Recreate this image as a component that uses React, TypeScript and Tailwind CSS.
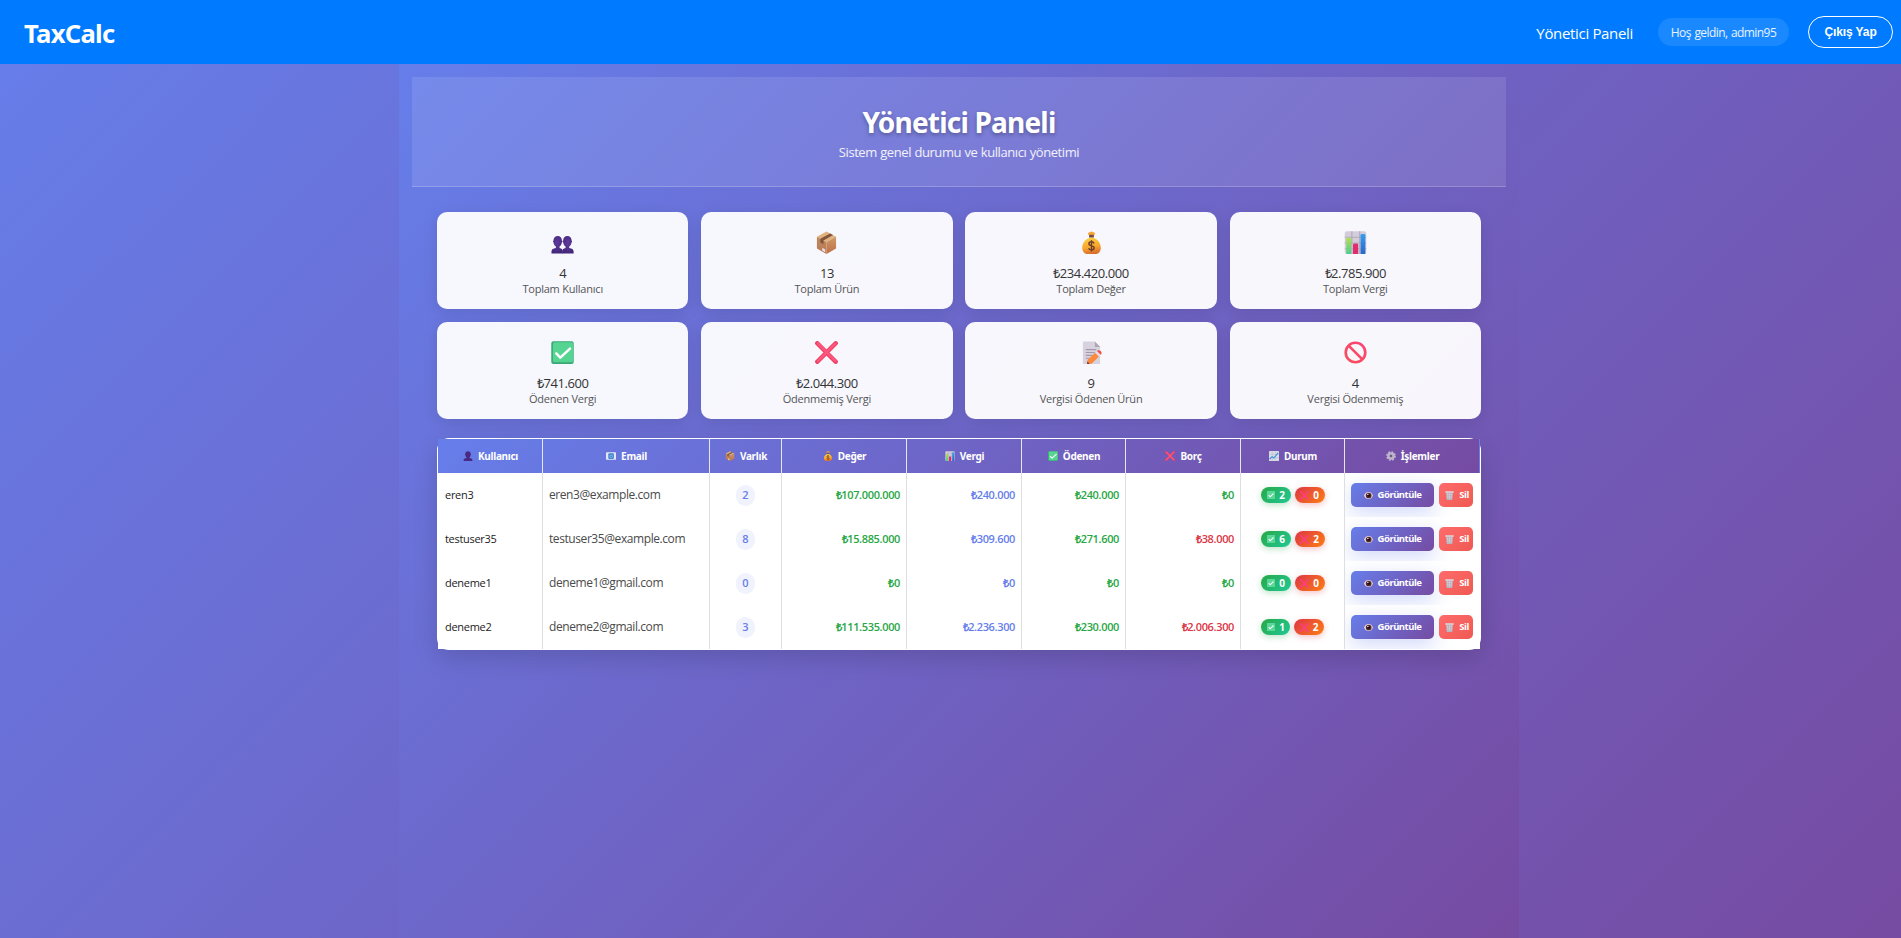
import React from 'react';

type IconProps = { className?: string };

const svg = (body: React.ReactNode) =>
  function Icon({ className = '' }: IconProps) {
    return (
      <svg viewBox="0 0 24 24" className={`block shrink-0 ${className}`} aria-hidden="true">
        {body}
      </svg>
    );
  };

const UsersIcon = svg(
  <>
    <defs>
      <radialGradient id="usr" cx="0.5" cy="0.4" r="0.7">
        <stop offset="0" stopColor="#5f3a9c" />
        <stop offset="1" stopColor="#3f2474" />
      </radialGradient>
    </defs>
    <path d="M0.5 23.6v-2.2c0-2.2 1.8-3.4 4.6-3.7v-1.5C3.6 15 2.9 13.700 2.700 12c-0.800-0.200-0.800-1.700-0.100-2C2.700 7 4.400 5.300 7 5.300s4.300 1.700 4.400 4.700c0.700 0.300 0.700 1.800-0.100 2-0.200 1.700-0.900 3-2.400 4.200v1.500c2.200 0.300 3.400 1.500 3.400 3.700v2.200z" fill="url(#usr)" />
    <path d="M11.800 23.600v-2.200c0-2.200 1.200-3.400 3.400-3.700v-1.500c-1.500-1.200-2.200-2.500-2.400-4.200-0.800-0.200-0.800-1.700-0.100-2 0.100-3 1.800-4.700 4.400-4.700s4.300 1.700 4.400 4.700c0.700 0.300 0.700 1.800-0.100 2-0.200 1.700-0.900 3-2.400 4.200v1.500c2.800 0.300 4.600 1.500 4.600 3.700v2.200z" fill="url(#usr)" />
  </>,
);

const UserIcon = svg(
  <path d="M1.500 24v-2.500c0-3 2.600-4.500 6.900-5v-1.800C6.600 13.400 5.700 11.700 5.500 9.500c-0.900-0.300-0.900-2.100-0.100-2.500C5.600 3 8.200 0.500 12 0.500s6.400 2.500 6.600 6.500c0.800 0.400 0.800 2.200-0.100 2.500-0.200 2.200-1.100 3.900-2.900 5.200v1.800c4.300 0.500 6.900 2 6.900 5V24z" fill="#482a83" />,
);

const BoxIcon = svg(
  <>
    <defs>
      <linearGradient id="bxl" x1="0" y1="0" x2="0" y2="1">
        <stop offset="0" stopColor="#c08a5e" />
        <stop offset="1" stopColor="#b87a55" />
      </linearGradient>
      <linearGradient id="bxr" x1="0" y1="0" x2="0" y2="1">
        <stop offset="0" stopColor="#cf9a68" />
        <stop offset="1" stopColor="#bd7045" />
      </linearGradient>
    </defs>
    <path d="M12 0.500L22 6 12 11.500 2 6z" fill="#e0b37e" />
    <path d="M2 6l10 5.500V24L2 18.300z" fill="url(#bxl)" />
    <path d="M22 6l-10 5.500V24l10-5.700z" fill="url(#bxr)" />
    <path d="M5.600 8l10.200-5.400 3 1.600L8.800 9.800v3.900l-3.200-1.800z" fill="#82543a" />
    <path d="M7.600 17.600l3 1.700v2.800l-3-1.700z" fill="#ece2f2" />
  </>,
);

const MoneyIcon = svg(
  <>
    <defs>
      <linearGradient id="mny" x1="0.3" y1="0" x2="0.5" y2="1">
        <stop offset="0" stopColor="#ffd23f" />
        <stop offset="0.6" stopColor="#f5a52f" />
        <stop offset="1" stopColor="#d96a2c" />
      </linearGradient>
    </defs>
    <path d="M12 6.800C6.800 7 2.300 12 2.300 17.400 2.300 21.700 5 24 8.400 24h7.200c3.400 0 6.100-2.300 6.100-6.600C21.700 12 17.200 7 12 6.800z" fill="url(#mny)" />
    <path d="M8.800 4.300C7.800 2.700 8.600 1 10.300 1.400 11.200 0.300 13 0.300 13.800 1.400c1.700-0.400 2.400 1.300 1.400 2.900z" fill="#f7a63a" />
    <rect x="9.400" y="4" width="5.200" height="2.900" rx="1" fill="#7a4a3a" />
    <path d="M14.700 13c-0.400-1.200-1.400-1.700-2.700-1.700-1.500 0-2.700 0.700-2.700 2.100 0 2.900 5.500 1.300 5.500 4.200 0 1.400-1.200 2.200-2.800 2.200-1.500 0-2.600-0.700-2.900-2M12 9.700v11.800" fill="none" stroke="#6d3f2c" strokeWidth="1.500" />
  </>,
);

const ChartIcon = svg(
  <>
    <defs>
      <linearGradient id="cg" x1="0" y1="0" x2="0" y2="1">
        <stop offset="0" stopColor="#b4e04c" />
        <stop offset="1" stopColor="#47cf8c" />
      </linearGradient>
      <linearGradient id="cb" x1="0" y1="0" x2="0" y2="1">
        <stop offset="0" stopColor="#35a0ee" />
        <stop offset="1" stopColor="#2a68c8" />
      </linearGradient>
    </defs>
    <rect x="0.800" y="0.300" width="22.400" height="23.700" rx="2.200" fill="#d3cddb" />
    <path d="M8.200 0.300V24M16.400 0.300V24M0.800 6.500h22.400M0.800 12.500h22.400M0.800 18.500h22.400" stroke="#b3aabd" strokeWidth="1.200" />
    <path d="M2.400 24V8.500a1.500 1.500 0 0 1 1.500-1.500h2a1.500 1.500 0 0 1 1.500 1.500V24z" fill="url(#cg)" />
    <path d="M9.400 24V14.500a1.500 1.500 0 0 1 1.500-1.500h2.400a1.500 1.500 0 0 1 1.500 1.500V24z" fill="#e12c6d" />
    <path d="M17.300 24V4.500A1.500 1.500 0 0 1 18.800 3h2A1.500 1.500 0 0 1 22.300 4.500V24z" fill="url(#cb)" />
  </>,
);

const CheckIcon = svg(
  <>
    <rect x="0.300" y="0.300" width="23.400" height="23.700" rx="2.200" fill="#3aa876" />
    <rect x="2" y="1.200" width="21" height="21" rx="1.600" fill="#56d492" />
    <path d="M5.500 13l4.200 4.300L19.800 8" fill="none" stroke="#fff" strokeWidth="2.600" strokeLinecap="round" strokeLinejoin="round" />
  </>,
);

const CrossIcon = svg(
  <>
    <path d="M2.400 2.400l19.200 19.200M21.600 2.400L2.400 21.600" stroke="#ee3d5e" strokeWidth="4.600" strokeLinecap="round" />
    <path d="M3 2.600l18.400 18.400M21.400 2.600L3 21" stroke="#fc5681" strokeWidth="2.600" strokeLinecap="round" />
  </>,
);

const SmallCheckIcon = svg(
  <>
    <rect x="0" y="0" width="24" height="24" rx="1" fill="#58d896" />
    <path d="M5 12.500l4.500 4.800L19.500 7.500" fill="none" stroke="#fff" strokeWidth="3.200" />
  </>,
);

const SmallCrossIcon = svg(
  <path d="M1.500 1.500l21 21M22.500 1.500l-21 21" stroke="#ff3b8d" strokeWidth="3.600" strokeLinecap="round" />,
);

const MemoIcon = svg(
  <>
    <path d="M3 0.500h12.500l5.500 5.700V24H3z" fill="#d8d2df" />
    <path d="M15.500 0.500v5.700H21z" fill="#ada4b6" />
    <path d="M6 9h11M6 12h9.500M6 15h7M6 18h4" stroke="#a399ad" strokeWidth="1.200" />
    <path d="M8 19.500l7.800-7.300 4 4L12 23.800 7.300 24z" fill="#fb8a3c" />
    <path d="M15.800 12.200l1.900-1.800 4 4-1.900 1.800z" fill="#ead9e6" />
    <path d="M17.700 10.400c1.200-1.200 2.600-1.100 3.800 0.100 1.300 1.300 1.500 2.700 0.200 3.900z" fill="#ef4f43" />
    <path d="M7.300 24l0.500-2.800 2.200 2.700z" fill="#7b3a3a" />
  </>,
);

const BanIcon = svg(
  <>
    <defs>
      <linearGradient id="ban" x1="1" y1="0" x2="0" y2="1">
        <stop offset="0" stopColor="#fd4377" />
        <stop offset="1" stopColor="#f5505a" />
      </linearGradient>
    </defs>
    <circle cx="12" cy="12" r="10.200" fill="none" stroke="url(#ban)" strokeWidth="2.800" />
    <path d="M4.800 4.800l14.400 14.400" stroke="#fa4a66" strokeWidth="2.800" />
  </>,
);

const MailIcon = svg(
  <>
    <rect x="0" y="3" width="24" height="18" rx="1" fill="#e3e6f3" />
    <rect x="5.500" y="5.500" width="13.500" height="13.500" rx="3" fill="#3f7fd0" />
    <path d="M15.500 15.500c-4 2.500-7-0.500-6.200-3.800C10.200 8.500 15.500 8.700 15.500 12v2" fill="none" stroke="#bcd6f5" strokeWidth="1.500" />
  </>,
);

const TrendIcon = svg(
  <>
    <rect x="0" y="0" width="24" height="24" rx="2" fill="#d9dbe6" />
    <path d="M8 0.500v23M16 0.500v23M0.500 8h23M0.500 16h23" stroke="#b5b6c6" strokeWidth="1" />
    <path d="M1.500 19.500l6-6 4 3.500L22 4.500" fill="none" stroke="#2f8fe0" strokeWidth="2.600" />
  </>,
);

const GearIcon = svg(
  <>
    <circle cx="12" cy="12" r="9.800" fill="none" stroke="#bfb5cb" strokeWidth="3.800" strokeDasharray="4.400 3.297" />
    <circle cx="12" cy="12" r="6.200" fill="none" stroke="#bfb5cb" strokeWidth="6" />
    <circle cx="12" cy="12" r="2.800" fill="#6b5a86" />
  </>,
);

const EyeIcon = svg(
  <>
    <path d="M0 12C2.500 5.500 6.500 2.500 12 2.500s9.500 3 12 9.500c-2.500 6.500-6.500 9.500-12 9.500S2.500 18.500 0 12z" fill="#e6d6df" />
    <circle cx="12.500" cy="12" r="7.600" fill="#5a2c2c" />
    <circle cx="12.500" cy="12" r="3.800" fill="#1e0f18" />
    <circle cx="10.300" cy="9" r="1.800" fill="#fff" />
  </>,
);

const TrashIcon = svg(
  <>
    <path d="M2.500 4h19l-1.800 20H4.300z" fill="#b4a9b5" />
    <path d="M7 5l1 18M12 5v18M17 5l-1 18M3.500 10h17M4 16h16" stroke="#e2dbe3" strokeWidth="1.300" />
    <rect x="0.500" y="0.500" width="23" height="4" rx="1" fill="#ded7e0" />
  </>,
);

const stats = [
  { Icon: UsersIcon, value: '4', label: 'Toplam Kullanıcı' },
  { Icon: BoxIcon, value: '13', label: 'Toplam Ürün' },
  { Icon: MoneyIcon, value: '₺234.420.000', label: 'Toplam Değer' },
  { Icon: ChartIcon, value: '₺2.785.900', label: 'Toplam Vergi' },
  { Icon: CheckIcon, value: '₺741.600', label: 'Ödenen Vergi' },
  { Icon: CrossIcon, value: '₺2.044.300', label: 'Ödenmemiş Vergi' },
  { Icon: MemoIcon, value: '9', label: 'Vergisi Ödenen Ürün' },
  { Icon: BanIcon, value: '4', label: 'Vergisi Ödenmemiş' },
];

const columns = [
  { Icon: UserIcon, label: 'Kullanıcı', width: 'w-[105px]' },
  { Icon: MailIcon, label: 'Email', width: 'w-[167px]' },
  { Icon: BoxIcon, label: 'Varlık', width: 'w-[72px]' },
  { Icon: MoneyIcon, label: 'Değer', width: 'w-[125px]' },
  { Icon: ChartIcon, label: 'Vergi', width: 'w-[115px]' },
  { Icon: CheckIcon, label: 'Ödenen', width: 'w-[104px]' },
  { Icon: CrossIcon, label: 'Borç', width: 'w-[115px]' },
  { Icon: TrendIcon, label: 'Durum', width: 'w-[104px]' },
  { Icon: GearIcon, label: 'İşlemler', width: 'w-[135px]' },
];

const users = [
  { name: 'eren3', email: 'eren3@example.com', count: 2, value: '₺107.000.000', tax: '₺240.000', paid: '₺240.000', debt: '₺0', ok: 2, due: 0 },
  { name: 'testuser35', email: 'testuser35@example.com', count: 8, value: '₺15.885.000', tax: '₺309.600', paid: '₺271.600', debt: '₺38.000', ok: 6, due: 2 },
  { name: 'deneme1', email: 'deneme1@gmail.com', count: 0, value: '₺0', tax: '₺0', paid: '₺0', debt: '₺0', ok: 0, due: 0 },
  { name: 'deneme2', email: 'deneme2@gmail.com', count: 3, value: '₺111.535.000', tax: '₺2.236.300', paid: '₺230.000', debt: '₺2.006.300', ok: 1, due: 2 },
];

const cell = 'border-r border-[#dcdee2] bg-white p-0 align-middle';
const money = 'pr-[6px] text-right text-[11px] font-semibold tracking-[-0.36px]';

function Header() {
  return (
    <header className="flex h-16 items-center justify-between bg-[#007bff] pl-6 pr-2 text-white">
      <div className="pt-[4px] font-['Noto_Sans',sans-serif] text-[25.6px] font-bold leading-8 tracking-[-0.7px]">TaxCalc</div>
      <div className="flex items-center">
        <a className="mr-[25px] pt-[2px] text-[15px] font-medium leading-6 tracking-[-0.33px]">Yönetici Paneli</a>
        <span className="mr-[19px] flex h-7 w-[131px] items-center justify-center rounded-full bg-white/10 pt-px text-[12px] tracking-[-0.58px] text-white/90 [word-spacing:1px]">
          Hoş geldin, admin95
        </span>
        <button className="h-8 w-[85px] rounded-full border border-white font-['Liberation_Sans',Arial,sans-serif] text-[12px] font-bold leading-none tracking-[-0.1px]">
          Çıkış Yap
        </button>
      </div>
    </header>
  );
}

function UserTable() {
  return (
    <div className="mt-[19px] rounded-xl bg-white p-px shadow-[0_8px_25px_rgba(0,0,0,0.15)]">
      <table className="w-full table-fixed border-separate border-spacing-0">
        <thead className="bg-[linear-gradient(135deg,#667eea_0%,#764ba2_100%)]">
          <tr className="h-[34px]">
            {columns.map(({ Icon, label, width }) => (
              <th key={label} className={`${width} border-r border-[#e6e6ee] p-0 align-middle last:border-[#667eea]`}>
                <span className="flex items-center justify-center gap-[5px] pl-px font-['Noto_Sans',sans-serif] text-[10px] font-bold leading-4 tracking-[-0.3px] text-white">
                  <Icon className="-mt-px size-[10px]" />
                  {label}
                </span>
              </th>
            ))}
          </tr>
        </thead>
        <tbody>
          {users.map((u) => (
            <tr key={u.name} className="h-[44px]">
              <td className={`${cell} pl-[7px] text-[11px] tracking-[-0.3px] text-[#222]`}>{u.name}</td>
              <td className={`${cell} pl-[6px] text-[12px] font-medium tracking-[-0.42px] text-[#4a4a4a]`}>{u.email}</td>
              <td className={cell}>
                <span className="mx-auto flex h-[21px] w-[19px] items-center justify-center rounded-full bg-[#f0f2fd] text-[11px] font-semibold text-[#667eea]">
                  {u.count}
                </span>
              </td>
              <td className={`${cell} ${money} text-[#28a745]`}>{u.value}</td>
              <td className={`${cell} ${money} text-[#667eea]`}>{u.tax}</td>
              <td className={`${cell} ${money} text-[#28a745]`}>{u.paid}</td>
              <td className={`${cell} ${money} ${u.debt === '₺0' ? 'text-[#28a745]' : 'text-[#dc3545]'}`}>{u.debt}</td>
              <td className={cell}>
                <div className="flex justify-center gap-1 text-[10px] font-bold leading-4 text-white">
                  <span
                    className={`${u.ok === 1 ? 'w-[29px]' : 'w-[30px]'} flex h-4 items-center justify-center gap-[4px] rounded-full bg-[linear-gradient(135deg,#28a745_0%,#20c997_100%)] pl-px shadow-[0_2px_6px_rgba(40,167,69,0.3)]`}
                  >
                    <SmallCheckIcon className="size-[8px]" />
                    {u.ok}
                  </span>
                  <span className="flex h-4 w-[30px] items-center justify-center gap-[4px] rounded-full bg-[linear-gradient(135deg,#dc3545_0%,#fd7e14_100%)] shadow-[0_2px_6px_rgba(220,53,69,0.3)]">
                    <SmallCrossIcon className="size-[9px]" />
                    {u.due}
                  </span>
                </div>
              </td>
              <td className="overflow-hidden bg-white p-0 align-middle">
                <div className="flex h-[44px] items-center gap-[5px] overflow-hidden pl-[6px] font-['Noto_Sans',sans-serif] text-[9.5px] font-bold leading-4 text-white">
                  <button className="flex h-6 w-[83px] items-center justify-center gap-[5px] rounded-[5px] bg-[linear-gradient(135deg,#667eea_0%,#764ba2_100%)] tracking-[-0.48px] shadow-[0_6px_20px_rgba(102,126,234,0.3)]">
                    <EyeIcon className="size-[9px]" />
                    Görüntüle
                  </button>
                  <button className="relative flex h-6 w-[34px] items-center justify-center gap-[5px] rounded-[5px] bg-[linear-gradient(135deg,#ff6b6b_0%,#ee5a52_100%)] pl-[2px] tracking-[-0.4px]">
                    <TrashIcon className="size-[9px]" />
                    Sil
                  </button>
                </div>
              </td>
            </tr>
          ))}
        </tbody>
      </table>
    </div>
  );
}

export default function App() {
  return (
    <div className="flex h-[938px] flex-col overflow-hidden bg-[linear-gradient(135deg,#667eea_0%,#764ba2_100%)] font-['Open_Sans',sans-serif]">
      <Header />
      <main className="ml-[399px] w-[1120px] flex-1 bg-[linear-gradient(135deg,#667eea_0%,#764ba2_100%)] p-[13px]">
        <div className="h-[110px] border-b border-white/20 bg-white/10 pt-[28px] text-center">
          <h1 className="font-['Noto_Sans',sans-serif] text-[28px] font-bold leading-[35px] tracking-[-0.8px] text-white [text-shadow:0_2px_4px_rgba(0,0,0,0.3)]">
            Yönetici Paneli
          </h1>
          <p className="mt-[3px] text-[13px] leading-[19px] tracking-[-0.42px] text-white/90 [word-spacing:0.4px]">
            Sistem genel durumu ve kullanıcı yönetimi
          </p>
        </div>
        <div className="px-[25px] pt-[25px]">
          <div className="grid grid-cols-4 gap-x-[12.8px] gap-y-[13px]">
            {stats.map(({ Icon, value, label }) => (
              <div key={label} className="flex h-[97px] flex-col items-center rounded-[10px] bg-white/95 pt-[19px] shadow-[0_4px_15px_rgba(0,0,0,0.1)]">
                <Icon className="size-[23px]" />
                <div className="mt-[11px] text-[13px] leading-4 tracking-[-0.43px] text-[#333]">{value}</div>
                <div className="text-[11px] leading-4 tracking-[-0.22px] text-[#555]">{label}</div>
              </div>
            ))}
          </div>
          <UserTable />
        </div>
      </main>
    </div>
  );
}
